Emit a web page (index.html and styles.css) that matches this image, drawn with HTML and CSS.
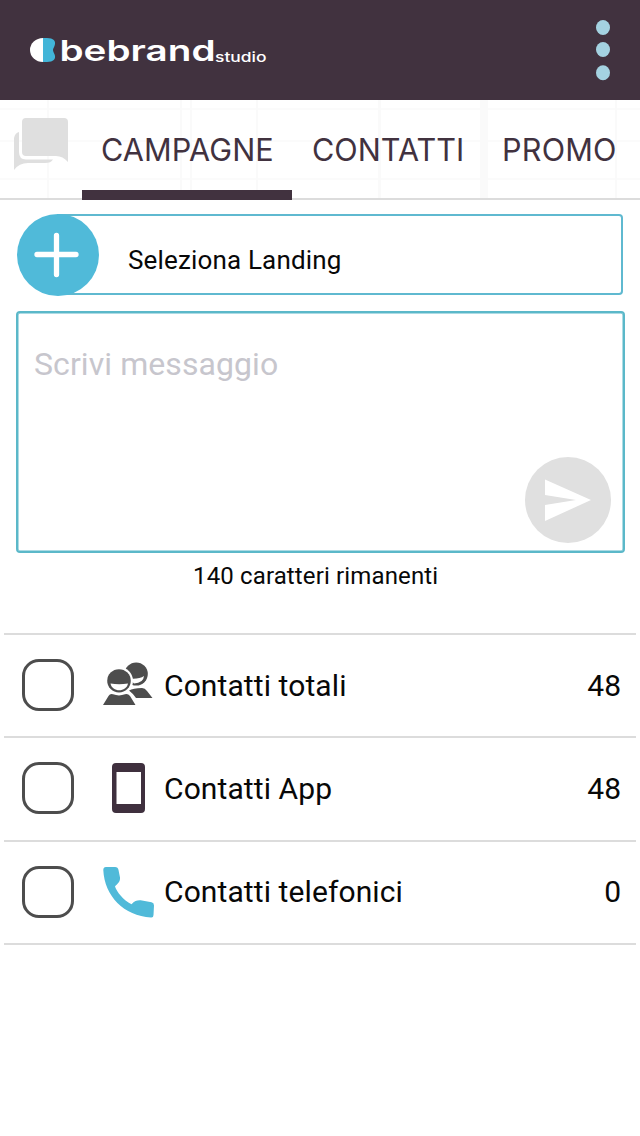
FILE: index.html
```html
<!DOCTYPE html>
<html lang="it">
<head>
<meta charset="utf-8">
<title>bebrand studio</title>
<link rel="stylesheet" href="styles.css">
</head>
<body>
<header class="topbar">
  <svg class="logo" width="240" height="40" viewBox="0 0 240 40">
    <path d="M13 8A13 12 0 0 0 13 32Z" fill="#fff"/>
    <path d="M13 8H17C23.500 8 26 11 24.800 15C24 17.500 23 18.500 23 20C23 21.500 24 22.500 24.800 25C26 29 23.500 32 17 32H13Z" fill="#42b5d8"/>
    <text class="brand" x="29.500" y="31.300" textLength="156" lengthAdjust="spacingAndGlyphs">bebrand</text>
    <text class="brand-sub" x="185" y="31.500" textLength="51.500" lengthAdjust="spacingAndGlyphs">studio</text>
  </svg>
  <svg class="more" width="16" height="64" viewBox="0 0 16 64">
    <ellipse cx="8" cy="9.500" rx="7" ry="7.500"/><ellipse cx="8" cy="31.500" rx="7" ry="7.500"/><ellipse cx="8" cy="54.700" rx="7" ry="7.500"/>
  </svg>
</header>
<nav class="tabs">
  <div class="tab tab-chat">
    <svg width="56" height="56" viewBox="0 0 56 56" fill="#dfdfdf">
      <path d="M12 2H50Q54 2 54 6V46Q49 40 42 40H12Q8 40 8 36V6Q8 2 12 2Z"/>
      <path d="M0 22Q1 17 5 16V36Q5 43.500 12 43.500H39Q37 47 31 47H14Q5 47 0 54Z"/>
    </svg>
  </div>
  <div class="tab tab-campagne active">CAMPAGNE</div>
  <div class="tab tab-contatti">CONTATTI</div>
  <div class="tab tab-promo">PROMO</div>
</nav>
<main class="content">
  <div class="landing">
    <svg class="add" width="82" height="82" viewBox="0 0 82 82">
      <circle cx="41" cy="41" r="41" fill="#50bad9"/>
      <path d="M20 40.500H59M39.500 21.500V60.500" stroke="#fff" stroke-width="5.300" stroke-linecap="round"/>
    </svg>
    <span class="landing-label">Seleziona Landing</span>
  </div>
  <div class="message">
    <span class="placeholder">Scrivi messaggio</span>
    <svg class="send" width="86" height="86" viewBox="0 0 86 86">
      <circle cx="43" cy="43" r="43" fill="#e0e0e0"/>
      <path d="M20 22.500L66 43L20 64V48L51 43L20 38Z" fill="#fff"/>
    </svg>
  </div>
  <p class="remaining">140 caratteri rimanenti</p>
  <ul class="groups">
    <li class="group">
      <span class="check"></span>
      <svg class="icon" width="54" height="52" viewBox="0 0 54 52">
        <ellipse cx="35.200" cy="15" rx="11.600" ry="11.600" fill="#4d4d4d"/>
        <path fill="#fff" d="M28 19.500Q38 20.500 43 17Q42.500 24 33 24.500Z"/>
        <path fill="#4d4d4d" d="M28 31.500Q32 29 41 29Q44 29 46 32L51.500 39H35Q32 34.500 28 31.500Z"/>
        <ellipse cx="18" cy="21.800" rx="14" ry="13.800" fill="#fff"/>
        <ellipse cx="18" cy="21.800" rx="11.800" ry="11.600" fill="#4d4d4d"/>
        <path fill="#fff" d="M9.500 24.500Q18 26 27 24.500C25.500 33.500 11 33.500 9.500 24.500Z"/>
        <path fill="#4d4d4d" d="M2 46L7.500 37Q9 34.500 12 35.300Q18 37.500 24 35.300Q27 34.500 29 37L34.500 46Z"/>
      </svg>
      <span class="name">Contatti totali</span>
      <span class="count">48</span>
    </li>
    <li class="group">
      <span class="check"></span>
      <svg class="icon" width="54" height="52" viewBox="0 0 54 52">
        <path fill="#3f303e" fill-rule="evenodd" d="M15 1H40Q44 1 44 5V47Q44 51 40 51H15Q11 51 11 47V5Q11 1 15 1ZM15.500 10V42H40V10Z"/>
      </svg>
      <span class="name">Contatti App</span>
      <span class="count">48</span>
    </li>
    <li class="group">
      <span class="check"></span>
      <svg class="icon" width="54" height="52" viewBox="0 0 54 52">
        <path fill="#50bad9" d="M5 1H14Q17 1 17.500 4L19 11.500C19.500 16 16 18 14 20.500C16 26 22 34 30.500 38.200C34 34.500 36.500 34 41 34.400L50.500 36.300Q53 36.800 53 39.500L52.500 49Q52.500 51.700 50 51.500C23 50 3.500 30 2.300 4Q2.300 1 5 1Z"/>
      </svg>
      <span class="name">Contatti telefonici</span>
      <span class="count">0</span>
    </li>
  </ul>
</main>
</body>
</html>
```
FILE: styles.css
```css
* { box-sizing: border-box; }
body { margin: 0; width: 640px; height: 1136px; background: #fff; color: #080808; font-family: Roboto, sans-serif; overflow: hidden; }
.topbar { height: 100px; background: #41323f; display: flex; justify-content: space-between; padding: 18px 29px 0 30px; }
.logo { margin-top: 12px; }
.brand, .brand-sub { fill: #fff; font-family: Inter, sans-serif; font-weight: 600; font-size: 29px; }
.brand-sub { font-size: 13.500px; font-weight: 500; }
.more { fill: #a4d2e1; }
.tabs {
  height: 100px; display: flex; border-bottom: 2px solid #dcdcdc;
  background:
    linear-gradient(90deg, transparent 47px, #fafafa 47px 49px, transparent 49px 180px, #fafafa 180px 182px, transparent 182px 190px, #fafafa 190px 192px, transparent 192px 256px, #fafafa 256px 258px, transparent 258px 378px, #fafafa 378px 381px, transparent 381px 480px, #fafafa 480px 488px, transparent 488px 615px, #fafafa 615px 617px, transparent 617px),
    linear-gradient(transparent 8px, #fbfbfb 8px 10px, transparent 10px 40px, #fbfbfb 40px 42px, transparent 42px 78px, #fbfbfb 78px 80px, transparent 80px), #fff;
}
.tab { height: 100px; font: 400 30.600px/100px Inter, sans-serif; color: #41323f; white-space: nowrap; }
.tab-chat { width: 82px; padding: 16px 0 0 14px; line-height: 0; }
.tab-campagne { width: 210px; padding-left: 19px; letter-spacing: 0.080px; }
.active { border-bottom: 10px solid #41323f; }
.tab-contatti { width: 190px; padding-left: 20px; }
.tab-promo { padding-left: 20px; letter-spacing: 0.200px; }
.content { padding: 14px 15px 0 16px; }
.landing { width: 566px; height: 81px; margin-left: 41px; border: 2.500px solid #5fb9d0; border-left: 0; border-radius: 0 4px 4px 0; display: flex; align-items: center; }
.add { flex: none; margin-left: -40.500px; }
.landing-label { margin: 11px 0 0 29.500px; font-size: 26px; letter-spacing: 0.160px; white-space: nowrap; }
.message { height: 242px; margin-top: 16px; border: 2.500px solid #5bb8c9; box-shadow: inset 0 0 0 0.500px #5bb8c9; border-radius: 4px; display: flex; justify-content: space-between; padding: 32px 12px 8px 16px; }
.placeholder { font-size: 32px; line-height: 38px; letter-spacing: 0.080px; color: #c7c6cd; white-space: nowrap; }
.send { align-self: flex-end; }
.remaining { margin: 9px 0 0 177px; font-size: 24px; line-height: 28px; letter-spacing: 0.140px; white-space: nowrap; }
.groups { list-style: none; margin: 43px -11px 0 -12px; padding: 0; border-top: 2px solid #dcdcdc; }
.group { height: 103.300px; border-bottom: 2px solid #dcdcdc; display: flex; align-items: center; padding: 0 15px 1px 18px; }
.check { width: 52px; height: 52px; border: 3px solid #4d4d4d; border-radius: 17px; }
.icon { margin-left: 27px; }
.name { margin-left: 9px; font-size: 30px; letter-spacing: 0.100px; }
.count { margin-left: auto; font-size: 30px; }
```
